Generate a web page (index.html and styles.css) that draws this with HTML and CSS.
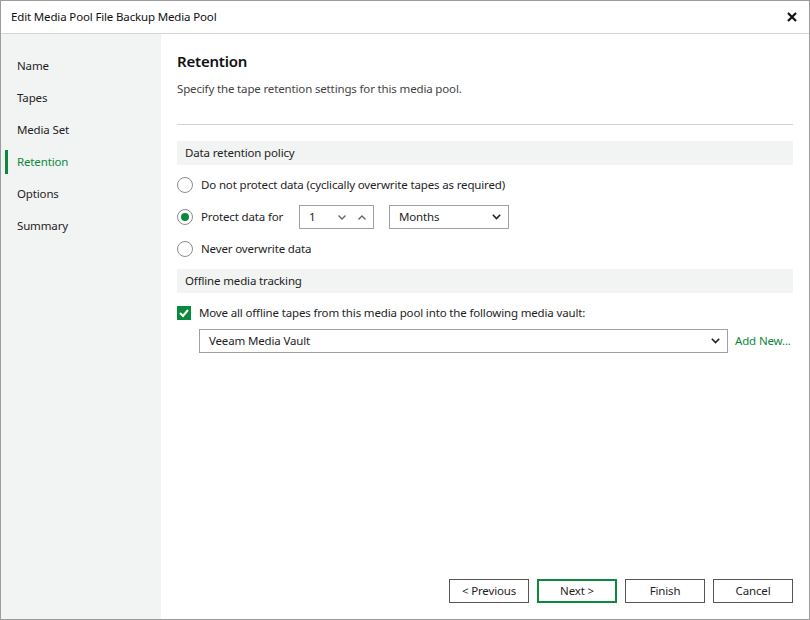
FILE: index.html
```html
<!DOCTYPE html>
<html>
<head>
<meta charset="utf-8">
<link rel="stylesheet" href="styles.css">
</head>
<body>
<div class="window">
  <div class="titlebar">
    <span class="title">Edit Media Pool File Backup Media Pool</span>
    <svg class="close" width="10" height="10" viewBox="0 0 10 10"><path d="M1 1 L9 9 M9 1 L1 9" stroke="#111" stroke-width="2.2"/></svg>
  </div>
  <div class="main">
    <nav class="sidebar">
      <div class="nav-item">Name</div>
      <div class="nav-item">Tapes</div>
      <div class="nav-item">Media Set</div>
      <div class="nav-item active">Retention</div>
      <div class="nav-item">Options</div>
      <div class="nav-item">Summary</div>
    </nav>
    <section class="content">
      <h1 class="heading">Retention</h1>
      <p class="desc">Specify the tape retention settings for this media pool.</p>
      <div class="rule"></div>
      <div class="band">Data retention policy</div>
      <div class="row">
        <span class="radio"></span>
        <span class="label">Do not protect data (cyclically overwrite tapes as required)</span>
      </div>
      <div class="row">
        <span class="radio checked"></span>
        <span class="label fixed">Protect data for</span>
        <div class="spinner">
          <span class="val">1</span>
          <svg class="chev down" width="8" height="5" viewBox="0 0 8 5"><polyline points="0.5,0.5 4,4 7.5,0.5" fill="none" stroke="#666" stroke-width="1.4"/></svg>
          <svg class="chev up" width="8" height="5" viewBox="0 0 8 5"><polyline points="0.5,4.5 4,1 7.5,4.5" fill="none" stroke="#666" stroke-width="1.4"/></svg>
        </div>
        <div class="select months">
          <span class="val">Months</span>
          <svg class="chev" width="9" height="6" viewBox="0 0 9 6"><polyline points="0.8,0.8 4.5,4.5 8.2,0.8" fill="none" stroke="#222" stroke-width="1.6"/></svg>
        </div>
      </div>
      <div class="row">
        <span class="radio"></span>
        <span class="label">Never overwrite data</span>
      </div>
      <div class="band">Offline media tracking</div>
      <div class="row">
        <span class="checkbox"><svg width="14" height="14" viewBox="0 0 14 14"><polyline points="3,7 6,10 11,4" fill="none" stroke="#fff" stroke-width="2"/></svg></span>
        <span class="label">Move all offline tapes from this media pool into the following media vault:</span>
      </div>
      <div class="row vault">
        <div class="select combo">
          <span class="val">Veeam Media Vault</span>
          <svg class="chev" width="9" height="6" viewBox="0 0 9 6"><polyline points="0.8,0.8 4.5,4.5 8.2,0.8" fill="none" stroke="#222" stroke-width="1.6"/></svg>
        </div>
        <span class="link">Add New...</span>
      </div>
      <div class="spacer"></div>
      <div class="buttons">
        <button class="btn">&lt; Previous</button>
        <button class="btn primary">Next &gt;</button>
        <button class="btn">Finish</button>
        <button class="btn">Cancel</button>
      </div>
    </section>
  </div>
</div>
</body>
</html>
```

FILE: styles.css
```css
* { box-sizing: border-box; }
html, body { margin: 0; padding: 0; }
body {
  font-family: "Noto Sans", "Open Sans", sans-serif;
  font-size: 11.5px;
  letter-spacing: -0.15px;
  color: #1e1e1e;
  background: #fff;
}
.window {
  width: 810px;
  height: 620px;
  border: 1px solid #9c9c9c;
  display: flex;
  flex-direction: column;
  background: #fff;
}
.titlebar {
  height: 33px;
  flex: none;
  border-bottom: 1px solid #d4d4d4;
  display: flex;
  align-items: center;
  justify-content: space-between;
  padding: 0 12px 0 10px;
}
.title { color: #111; padding-bottom: 1px; }
.close { display: block; }
.main {
  flex: 1;
  display: flex;
  min-height: 0;
}
.sidebar {
  width: 160px;
  flex: none;
  background: #f2f3f3;
  padding-top: 16px;
}
.nav-item {
  height: 32px;
  line-height: 32px;
  padding-left: 16px;
  position: relative;
  color: #1e1e1e;
}
.nav-item.active { color: #0b8a3e; }
.nav-item.active::before {
  content: "";
  position: absolute;
  left: 4px;
  top: 4px;
  width: 3px;
  height: 24px;
  background: #0b8a3e;
}
.content {
  flex: 1;
  display: flex;
  flex-direction: column;
  padding: 17px 16px 16px 16px;
}
.heading {
  margin: 0;
  font-size: 15px;
  font-weight: 600;
  letter-spacing: -0.2px;
  line-height: 20px;
  color: #111;
}
.desc {
  margin: 10px 0 0 0;
  line-height: 16px;
  color: #444;
}
.rule {
  margin-top: 27px;
  height: 1px;
  background: #d2d2d2;
}
.band {
  margin-top: 16px;
  height: 24px;
  line-height: 23px;
  background: #f2f3f3;
  padding-left: 8px;
  color: #1e1e1e;
}
.row + .band { margin-top: 8px; }
.row {
  margin-top: 8px;
  height: 24px;
  display: flex;
  align-items: center;
  white-space: nowrap;
}
.row.vault { margin-top: 4px; padding-left: 22px; }
.label, .val, .link { padding-bottom: 1px; }
.radio {
  width: 16px;
  height: 16px;
  border: 1px solid #8c8c8c;
  border-radius: 50%;
  background: #fff;
  margin-right: 8px;
  flex: none;
  display: flex;
  align-items: center;
  justify-content: center;
}
.radio.checked::after {
  content: "";
  width: 8px;
  height: 8px;
  border-radius: 50%;
  background: #0b8a3e;
}
.checkbox {
  width: 14px;
  height: 14px;
  background: #0b8a3e;
  margin-right: 8px;
  flex: none;
  display: flex;
}
.label.fixed { width: 98px; flex: none; }
.spinner, .select {
  height: 24px;
  border: 1px solid #a0a0a0;
  display: flex;
  align-items: center;
  padding-left: 9px;
  background: #fff;
}
.spinner { width: 75px; flex: none; }
.spinner .val { flex: 1; }
.spinner .chev.down { margin-right: 12px; }
.spinner .chev.up { margin-right: 7px; }
.select .val { flex: 1; }
.select .chev { margin-right: 7px; }
.months { width: 120px; margin-left: 15px; flex: none; }
.combo { width: 529px; flex: none; }
.link { margin-left: 7px; color: #0b8a3e; }
.spacer { flex: 1; }
.buttons {
  display: flex;
  justify-content: flex-end;
  gap: 8px;
}
.btn {
  width: 80px;
  height: 24px;
  border: 1px solid #555;
  background: #fff;
  font-family: inherit;
  font-size: 11.5px;
  letter-spacing: -0.15px;
  color: #1e1e1e;
  padding: 0 0 2px 0;
}
.btn.primary { border: 2px solid #0b8a3e; }
```
